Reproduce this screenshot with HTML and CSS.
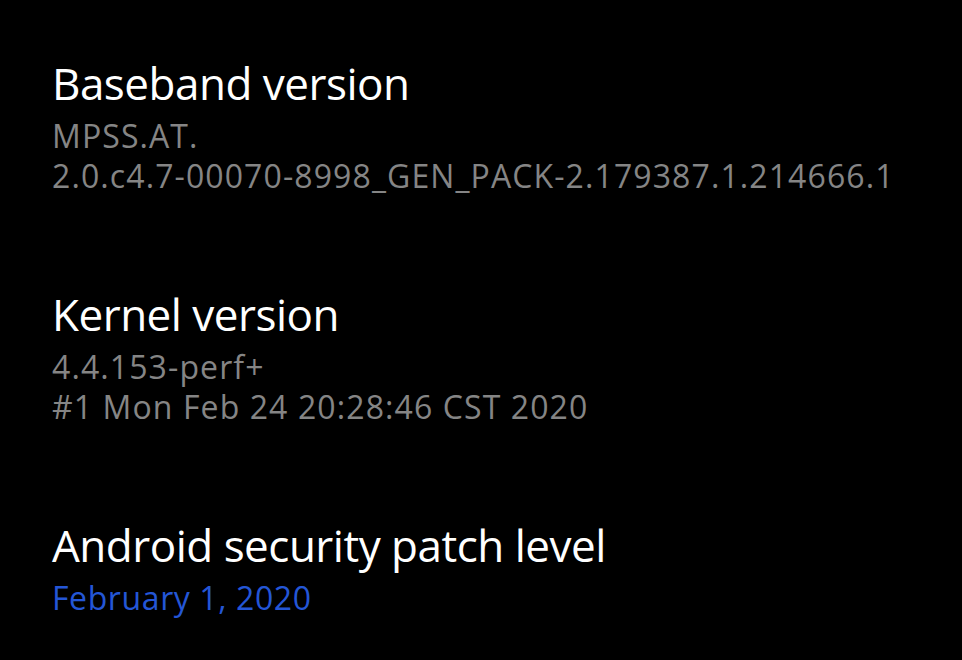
FILE: index.html
```html
<!DOCTYPE html>
<html>
<head>
<meta charset="utf-8">
<link rel="stylesheet" href="styles.css">
</head>
<body>
<div class="list">
  <div class="item">
    <div class="title">Baseband version</div>
    <div class="sub">MPSS.AT.<br>2.0.c4.7-00070-8998_GEN_PACK-2.179387.1.214666.1</div>
  </div>
  <div class="item">
    <div class="title">Kernel version</div>
    <div class="sub">4.4.153-perf+<br>#1 Mon Feb 24 20:28:46 CST 2020</div>
  </div>
  <div class="item">
    <div class="title">Android security patch level</div>
    <div class="sub link">February 1, 2020</div>
  </div>
</div>
</body>
</html>
```
FILE: styles.css
```css
html, body {
  margin: 0;
  padding: 0;
  background: #000;
  height: 100%;
}
body {
  font-family: "Open Sans", "Noto Sans", sans-serif;
  overflow: hidden;
}
.list {
  display: flex;
  flex-direction: column;
  padding: 57px 0 0 52px;
  gap: 92px;
}
.item {
  display: flex;
  flex-direction: column;
  gap: 7px;
}
.title {
  color: #fff;
  font-size: 44px;
  line-height: 52px;
  letter-spacing: -0.5px;
}
.sub {
  color: #858585;
  font-size: 32px;
  line-height: 40px;
  letter-spacing: 1.1px;
}
.link {
  color: #2456d6;
  letter-spacing: 0.6px;
}
```
